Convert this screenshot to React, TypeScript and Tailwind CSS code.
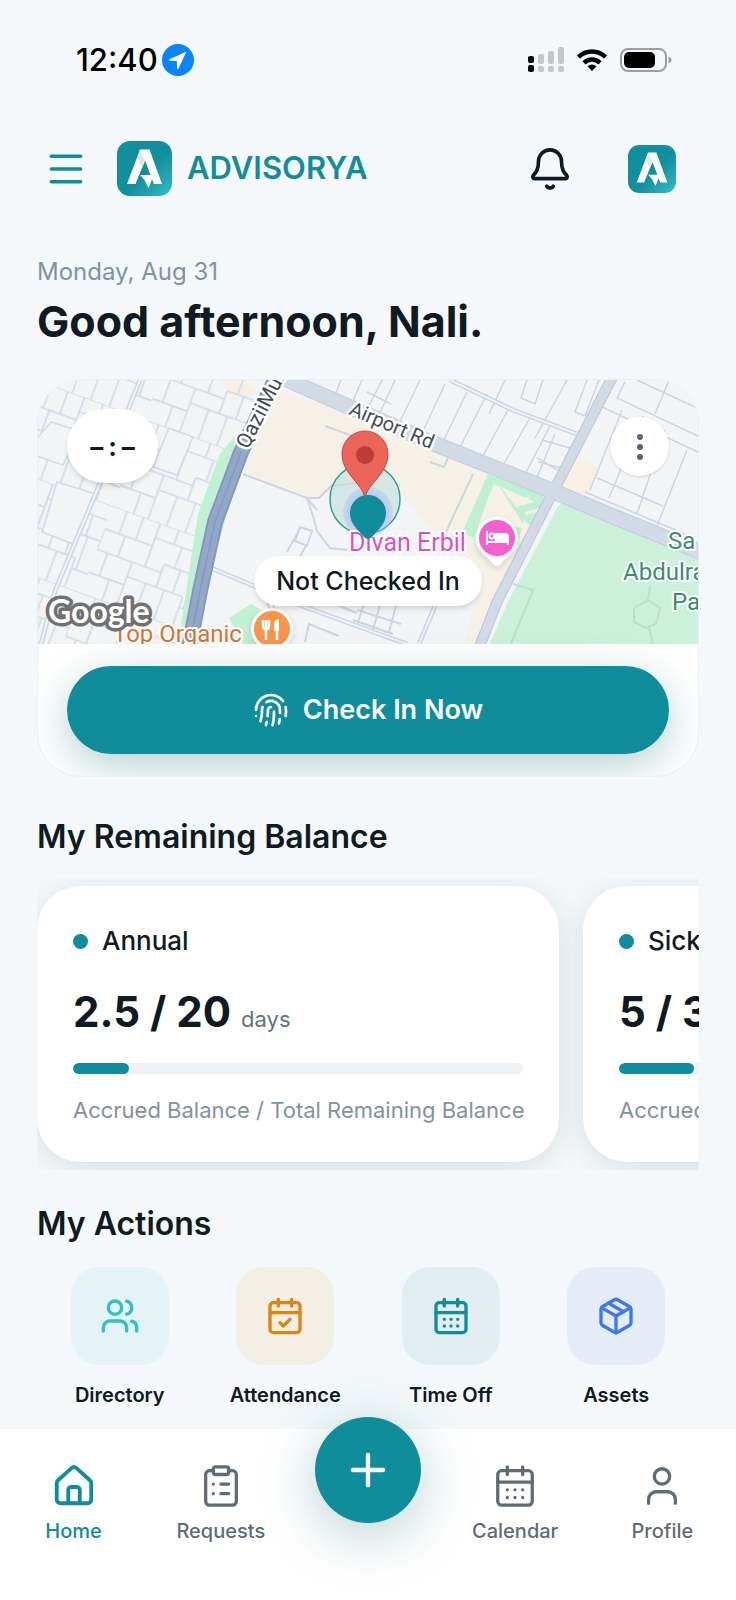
import {
  Bell,
  CalendarCheck,
  CalendarDays,
  ClipboardList,
  Fingerprint,
  Menu,
  Package,
  Plus,
  User,
  Users,
  type LucideIcon,
} from "lucide-react";

interface Balance {
  id: string;
  label: string;
  value: string;
  percent: number;
}

interface Action {
  label: string;
  icon: LucideIcon;
  tile: string;
}

const balances: Balance[] = [
  { id: "annual", label: "Annual", value: "2.5 / 20", percent: 12.5 },
  { id: "sick", label: "Sick", value: "5 / 30", percent: 16.7 },
];

const actions: Action[] = [
  { label: "Directory", icon: Users, tile: "bg-[#e4f3f5] text-[#33bfc6]" },
  { label: "Attendance", icon: CalendarCheck, tile: "bg-[#f3eee6] text-[#dd850f]" },
  { label: "Time Off", icon: CalendarDays, tile: "bg-[#e1edf1] text-[#108d9b]" },
  { label: "Assets", icon: Package, tile: "bg-[#e5ecf8] text-[#3f78f0]" },
];

function Logo({ className }: { className: string }) {
  return (
    <svg viewBox="0 0 55 55" className={className} aria-hidden="true">
      <defs>
        <linearGradient id="logoBg" x1="0" y1="0" x2="1" y2="1">
          <stop offset="0.55" stopColor="#128f9c" />
          <stop offset="1" stopColor="#35bcc8" />
        </linearGradient>
      </defs>
      <rect width="55" height="55" rx="13" fill="url(#logoBg)" />
      <path d="M23 8.500h9.500L45 43h-8L28 19.500 18.500 43H10z" fill="#fff" />
      <path d="M23 34h12.500l2.200 6-2.700-1.500L31.500 47l-4-8z" fill="#fff" />
      <path d="M23 9l5 11-3 7-4.500-11z" fill="#dfe6e8" />
    </svg>
  );
}

function StatusBar() {
  return (
    <div className="flex h-[120px] items-center justify-between pl-[76px] pr-[64px]">
      <div className="flex items-center gap-1">
        <span className="text-[31px] font-medium leading-9 text-black">12:40</span>
        <svg viewBox="0 0 32 32" className="size-8" aria-label="Location in use">
          <circle cx="16" cy="16" r="16" fill="#0a84ff" />
          <path d="M24.500 7.500L7.500 15.300c-.8.400-.6 1.500.3 1.500l7 .3.300 7c0 .9 1.100 1.100 1.500.3z" fill="#fff" />
        </svg>
      </div>
      <div className="flex items-center gap-3">
        <svg viewBox="0 0 36 26" className="h-[26px] w-9" aria-label="Signal">
          <g fill="#c3c7cb">
            <rect x="10" y="7" width="6" height="10" rx="2" />
            <rect x="20" y="4" width="6" height="13" rx="2" />
            <rect x="30" y="0" width="6" height="17" rx="2" />
            <rect x="10" y="19" width="6" height="6" rx="2" />
            <rect x="20" y="19" width="6" height="6" rx="2" />
            <rect x="30" y="19" width="6" height="6" rx="2" />
          </g>
          <rect x="0" y="9" width="6" height="7" rx="2" />
          <rect x="0" y="18" width="6" height="7" rx="2" />
        </svg>
        <svg viewBox="0 0 32 24" className="h-6 w-8" fill="none" stroke="#000" strokeWidth="4.500" aria-label="Wi-Fi">
          <path d="M2.500 9a19.500 19.500 0 0 1 27 0" />
          <path d="M8 14.800a11.500 11.500 0 0 1 16 0" />
          <path d="M16 23l-4.500-4.700a6.500 6.500 0 0 1 9 0z" fill="#000" stroke="none" />
        </svg>
        <svg viewBox="0 0 52 24" className="h-6 w-[52px]" aria-label="Battery">
          <rect x="1" y="1" width="45" height="22" rx="7" fill="none" stroke="#9b9fa3" strokeWidth="2" />
          <rect x="4" y="4" width="31" height="16" rx="5" />
          <path d="M48.500 8.500c2 .7 3 2 3 3.500s-1 2.800-3 3.500z" fill="#9b9fa3" />
        </svg>
      </div>
    </div>
  );
}

function MapPicture() {
  return (
    <svg
      viewBox="0 0 662 264"
      preserveAspectRatio="xMidYMid slice"
      className="block h-full w-full"
      fontFamily="Roboto, sans-serif"
      role="img"
      aria-label="Map around Divan Erbil"
    >
      <defs>
        <pattern id="blocks" width="104" height="84" patternUnits="userSpaceOnUse" patternTransform="rotate(20) scale(1.1)">
          <path
            d="M0 0H104M0 22H46M46 14H104M0 42H62M62 34H104M0 64H34M34 56H88M88 66H104M14 0V22M30 0V22M46 0V42M64 0V14M82 0V14M72 14V34M90 14V34M20 22V42M34 42V84M10 42V64M20 64V84M62 34V56M78 34V56M92 34V66M52 56V84M70 56V84M88 56V84M0 22V42"
            fill="none"
            stroke="#d0dae6"
            strokeWidth="1.500"
          />
        </pattern>
        <clipPath id="leftTown">
          <path d="M0 0H225L197 70 172 140 148 264H0z" />
        </clipPath>
        <radialGradient id="accuracy">
          <stop offset="0.500" stopColor="#8fa6ee" stopOpacity="0.650" />
          <stop offset="1" stopColor="#a9bdf0" stopOpacity="0.350" />
        </radialGradient>
      </defs>

      <rect width="662" height="264" fill="#f3f4f5" />
      <path d="M238 10L300 28 450 92 518 118 496 160 454 235 446 264H428L434 238 446 190 405 160 365 115 318 104 275 118 206 92z" fill="#f6f1e6" />
      <path d="M516 110l18-42 28 22-15 28 113 50v8L540 128z" fill="#f8f0e3" />
      <path d="M183 0h28l10 14-26 6z" fill="#f8f0e3" />

      {/* housing blocks west of the main road */}
      <rect width="662" height="264" fill="url(#blocks)" clipPath="url(#leftTown)" />
      <g fill="#f3f4f5" stroke="#d0dae6" strokeWidth="1.500">
        <path d="M20 102l39 12-23 50-31-12z" />
        <path d="M14 42l28 9-16 34L0 76V58z" />
        <path d="M132 48l24 9-16 38-24-8z" />
      </g>
      <path d="M61 108L40 158 18 211 4 264M103 0L86 42 61 108" fill="none" stroke="#ccd7e4" strokeWidth="5" />
      <path d="M61 108L40 158 18 211 4 264M103 0L86 42 61 108" fill="none" stroke="#f0f3f6" strokeWidth="2" />

      {/* streets in the middle and south */}
      <g fill="none" stroke="#ccd5e2" strokeWidth="2">
        <path d="M206 94L270 118l6 18 4 15 13 17 18 2" />
        <path d="M270 118h12l12-12 26-3M270 118l10 12" />
        <path d="M288 46l30 11M393 82l14 5 8-18M436 94l-28 60" />
        <path d="M263 147l12 4-5 15-12-5zM250 172l10-18M262 178l8-14" />
        <path d="M268 262l4-18 30 12M225 210l8 20M240 215l-8 30" />
        <path d="M320 230l44 14M330 215l-10 30M345 218l-10 35M360 222l-8 30M316 240l40 14M300 225l20 8" />
      </g>
      <path d="M174 188L260 224 353 258 370 264M382 264l16-38" fill="none" stroke="#ccd5e2" strokeWidth="5" />
      <path d="M174 188L260 224 353 258 370 264M382 264l16-38" fill="none" stroke="#eef1f5" strokeWidth="2" />

      {/* parcels north of Airport Rd */}
      <g fill="none" stroke="#ccd5e2" strokeWidth="1.500">
        <path d="M325 0l-12 28M345 0l-20 40M358 0l-22 48M383 0l-27 56M408 4l-28 60M430 12l-28 58M450 14l-33 65M473 26l-34 63M494 36l-34 60M514 44l-32 62M330 12l24 12M304 0l-8 20" />
        <path d="M468 0l-16 34M490 0l-6 18 14 6 8-24M530 0l-32 58M550 0l-12 32 10 4M562 0l-14 36M505 60l28 8-8 20-24-6M500 78l24 14M498 102l20-48" />
        <path d="M563 26l98 46M588 2l-8 16 81 38M600 0l60 28M585 30l-32 80M606 36l-34 82M628 50l-28 84M650 70l-30 76M560 98l66 28M548 112l100 42M632 0l-14 34" />
      </g>
      <path d="M413 0L476 30 540 54" fill="none" stroke="#ccd5e2" strokeWidth="5" />
      <path d="M413 0L476 30 540 54" fill="none" stroke="#eef1f5" strokeWidth="2" />

      {/* parks */}
      <path d="M520 128q3-6 10-4L662 180v84H453l18-42z" fill="#cbf1da" />
      <path d="M476 204l20 6-22 54M613 206l-2 14-14 8v14l12 6 10-4 4-16-12-8M612 248l4 16" fill="none" stroke="#bddfd0" strokeWidth="2" />
      <path d="M455 96l50 22-38 62-40-18z" fill="#f6f1e6" />
      <path d="M451 94l8 4-8 20-14 40-12-5zM458 94l50 20-5 10-46-20zM462 106l22 20 24-8-4 10-16 4-2 12zM482 136l22-4-8 16zM455 140l30 8-6 20z" fill="#bff0d2" />
      <path d="M466 110l18 8 10-2-14 12z" fill="#f6f1e6" />
      <path d="M206 66L148 255h10L188 140l18-60z" fill="#bff0d0" />
      <path d="M203 50l-24 68-16 84-10 62h-12l20-130 22-60z" fill="#c1f1d3" />
      <path d="M192 238l22-14 18 10 2 30h-28z" fill="#c1f1d3" />
      <path d="M393 68l60 24" stroke="#bff0d2" strokeWidth="3" />

      {/* main roads */}
      <path d="M576 -4L514 116 460 222 442 268" fill="none" stroke="#bcc6d4" strokeWidth="11" />
      <path d="M246 -2L310 26 393 62 513 110 580 138 664 172" fill="none" stroke="#c3cddb" strokeWidth="16" />
      <path d="M246 -2L310 26 393 62 513 110 580 138 664 172" fill="none" stroke="#d2dae6" strokeWidth="14" />
      <path d="M576 -4L514 116 460 222 442 268" fill="none" stroke="#d2dae6" strokeWidth="9" />
      <path d="M240 -4L204 72 178 142 164 206 152 268" fill="none" stroke="#8299bb" strokeWidth="16" />
      <path d="M240 -4L204 72 178 142 164 206 152 268" fill="none" stroke="#94a9c9" strokeWidth="12" />
      <path d="M204 72L178 142 164 206 152 268" fill="none" stroke="#859bbd" strokeWidth="1.500" />

      {/* street names */}
      <g fill="#454c55" stroke="#fff" strokeWidth="5" strokeLinejoin="round" paintOrder="stroke">
        <text x="311" y="34" fontSize="20" transform="rotate(23 311 34)">Airport Rd</text>
        <text x="211" y="70" fontSize="21" transform="rotate(-63 211 70)">QaziiMun</text>
      </g>

      {/* check-in radius and current position */}
      <circle cx="328" cy="119" r="35" fill="#bcdedc" fillOpacity="0.550" stroke="#2f9f92" strokeWidth="1.500" />
      <circle cx="331" cy="132" r="25" fill="url(#accuracy)" />

      <g stroke="#fff" strokeWidth="4" strokeLinejoin="round" paintOrder="stroke">
        <text x="312" y="171" fontSize="25" fill="#e04ec6">Divan Erbil</text>
        <text x="76" y="262" fontSize="24" fill="#d9732f">Top Organic</text>
        <g fontSize="24" fill="#3b8e6d">
          <text x="631" y="169">Sa</text>
          <text x="586" y="200">Abdulra</text>
          <text x="635" y="230">Pa</text>
        </g>
      </g>

      <path d="M328 118c-2-14-23-24-23-44a23 23 0 0 1 46 0c0 20-21 30-23 44z" fill="#ec6559" stroke="#c9463d" strokeWidth="1" />
      <circle cx="328" cy="75" r="9" fill="#bd3b39" />
      <path d="M331 115a18 18 0 0 1 18 18c0 11-8 17-14 24q-4 4-8 0c-6-7-14-13-14-24a18 18 0 0 1 18-18z" fill="#108d9b" />

      <path d="M460 137a21 21 0 0 1 21 21c0 13-10 17-17 26q-4 4-8 0c-7-9-17-13-17-26a21 21 0 0 1 21-21z" fill="#fff" className="drop-shadow-md" />
      <circle cx="460" cy="158" r="18" fill="#f65fd0" />
      <g stroke="#fff" strokeWidth="2" fill="none">
        <path d="M450 151v14M450 162h21M471 165v-8q0-3-3-3h-9v7" />
        <circle cx="455" cy="156" r="2.500" />
        <path d="M460 155h8q2 0 2 2v3h-10z" fill="#fff" />
      </g>

      <circle cx="235" cy="249" r="21" fill="#fff" className="drop-shadow-md" />
      <circle cx="235" cy="249" r="18" fill="#f9954a" />
      <path d="M226 240v6q0 3 3 3t3-3v-6M229 240v20M240 250v10" fill="none" stroke="#fff" strokeWidth="2.500" />
      <path d="M242 239v12h-5v-6q0-5 5-6z" fill="#fff" />

      <text
        x="11"
        y="243"
        fontSize="32"
        fontFamily="Lato, sans-serif"
        fontWeight="700"
        fill="#fff"
        stroke="#6f7173"
        strokeWidth="7"
        strokeLinejoin="round"
        paintOrder="stroke"
      >
        Google
      </text>
    </svg>
  );
}

function CheckInCard() {
  return (
    <section className="mt-[26px] overflow-hidden rounded-[44px] border border-[#eaeff2] bg-white">
      <div className="relative h-[264px]">
        <MapPicture />
        <div className="absolute left-[29px] top-[29px] flex h-[74px] w-[91px] items-center justify-center gap-[5px] rounded-full bg-white text-[26px] font-bold text-[#0f1a22] shadow-md">
          <span>–</span>
          <span>:</span>
          <span>–</span>
        </div>
        <button
          type="button"
          aria-label="More options"
          className="absolute right-[29px] top-[37px] flex size-[59px] items-center justify-center rounded-full bg-white shadow-sm"
        >
          <svg viewBox="0 0 6 26" className="h-[26px] w-[6px]" fill="#5b6872">
            <circle cx="3" cy="3" r="3" />
            <circle cx="3" cy="13" r="3" />
            <circle cx="3" cy="23" r="3" />
          </svg>
        </button>
        <div className="absolute inset-x-0 bottom-[38px] flex justify-center">
          <span className="rounded-full bg-white px-[22px] text-[25px] font-medium leading-[50px] text-[#0f1a22] shadow-md">
            Not Checked In
          </span>
        </div>
      </div>
      <div className="px-[29px] pb-[22px] pt-[22px]">
        <button
          type="button"
          className="relative flex h-[88px] w-full items-center justify-center gap-[14px] rounded-full bg-[#108d9b] text-[27px] font-semibold text-white shadow-[0_12px_44px_rgba(16,100,110,0.3)]"
        >
          <Fingerprint className="size-9" strokeWidth={1.8} />
          Check In Now
        </button>
      </div>
    </section>
  );
}

function BalanceCard({ balance }: { balance: Balance }) {
  return (
    <article className="h-[276px] w-[522px] shrink-0 rounded-[44px] bg-white px-9 pt-[36px] shadow-[0_6px_30px_rgba(30,50,60,0.12)]">
      <h3 className="flex items-center gap-[14px] text-[26px] font-medium leading-[38px] text-[#0f1a22]">
        <span className="size-[15px] rounded-full bg-[#108d9b]" />
        {balance.label}
      </h3>
      <p className="mt-[26px] flex items-baseline gap-[10px] leading-[52px]">
        <span className="text-[42px] font-bold text-[#0f1a22]">{balance.value}</span>
        <span className="text-[22px] text-[#66737e]">days</span>
      </p>
      <div className="mt-[18px] h-[11px] overflow-hidden rounded-full bg-[#f0f3f6]">
        <div className="h-full rounded-full bg-[#108d9b]" style={{ width: `${balance.percent}%` }} />
      </div>
      <p className="mt-[20px] whitespace-nowrap text-[22px] leading-8 text-[#84929d]">
        Accrued Balance / Total Remaining Balance
      </p>
    </article>
  );
}

function HomeIcon() {
  return (
    <svg viewBox="0 0 24 24" className="size-[46px]" fill="none" stroke="currentColor" strokeWidth="2" strokeLinejoin="round" aria-hidden="true">
      <path d="M3 10.500a2 2 0 0 1 .7-1.500l7-6.300a2 2 0 0 1 2.600 0l7 6.300a2 2 0 0 1 .7 1.500V19a2 2 0 0 1-2 2H5a2 2 0 0 1-2-2z" />
      <path d="M9 21v-7a1.500 1.500 0 0 1 1.500-1.500h3A1.500 1.500 0 0 1 15 14v7" />
    </svg>
  );
}

function NavLink({ label, icon: Icon }: { label: string; icon: LucideIcon }) {
  return (
    <a href="#" className="flex flex-col items-center gap-[8px] text-[20px] font-medium leading-7 text-[#5f6c77]">
      <Icon className="size-[46px]" strokeWidth={1.7} />
      {label}
    </a>
  );
}

function BottomNav() {
  return (
    <nav className="mt-auto grid h-[171px] grid-cols-5 bg-white pt-[34px]">
      <a href="#" aria-current="page" className="flex flex-col items-center gap-[8px] text-[20px] font-medium leading-7 text-[#108d9b]">
        <HomeIcon />
        Home
      </a>
      <NavLink label="Requests" icon={ClipboardList} />
      <div className="-mt-[46px] flex justify-center">
        <button
          type="button"
          aria-label="New request"
          className="flex size-[106px] items-center justify-center rounded-full bg-[#108d9b] text-white shadow-[0_12px_56px_rgba(16,100,110,0.3)]"
        >
          <Plus className="size-[52px]" strokeWidth={2} />
        </button>
      </div>
      <NavLink label="Calendar" icon={CalendarDays} />
      <NavLink label="Profile" icon={User} />
    </nav>
  );
}

export default function App() {
  return (
    <div className="flex min-h-screen flex-col bg-[#f4f8fb] font-['Inter','Liberation_Sans',sans-serif] text-[#0f1a22]">
      <StatusBar />

      <header className="flex h-[97px] items-center pl-11 pr-[60px]">
        <button type="button" aria-label="Open menu" className="text-[#108d9b]">
          <Menu className="size-11" strokeWidth={1.9} />
        </button>
        <Logo className="ml-[29px] size-[55px]" />
        <span className="ml-[15px] text-[31px] font-semibold text-[#168c99]">ADVISORYA</span>
        <button type="button" aria-label="Notifications" className="ml-auto">
          <Bell className="size-[46px]" strokeWidth={1.9} />
        </button>
        <button type="button" aria-label="Account" className="ml-[55px]">
          <Logo className="size-12" />
        </button>
      </header>

      <main className="px-[37px] pt-[38px]">
        <p className="text-[24px] leading-[34px] text-[#84929d]">Monday, Aug 31</p>
        <h1 className="mt-[4px] text-[43px] font-bold leading-[56px]">Good afternoon, Nali.</h1>

        <div className="pt-1">
          <CheckInCard />
        </div>

        <h2 className="mt-[39px] text-[32px] font-semibold leading-[42px]">My Remaining Balance</h2>
        <div className="mt-[20px] flex gap-6 overflow-hidden pb-2 pt-2">
          {balances.map((balance) => (
            <BalanceCard key={balance.id} balance={balance} />
          ))}
        </div>

        <h2 className="mt-[33px] text-[32px] font-semibold leading-[42px]">My Actions</h2>
        <div className="mt-[22px] grid grid-cols-4">
          {actions.map(({ label, icon: Icon, tile }) => (
            <button key={label} type="button" className="flex flex-col items-center gap-4 text-[20px] font-semibold leading-7">
              <span className={`flex size-[98px] items-center justify-center rounded-[28px] ${tile}`}>
                <Icon className="size-10" strokeWidth={2} />
              </span>
              {label}
            </button>
          ))}
        </div>
      </main>

      <BottomNav />
    </div>
  );
}
